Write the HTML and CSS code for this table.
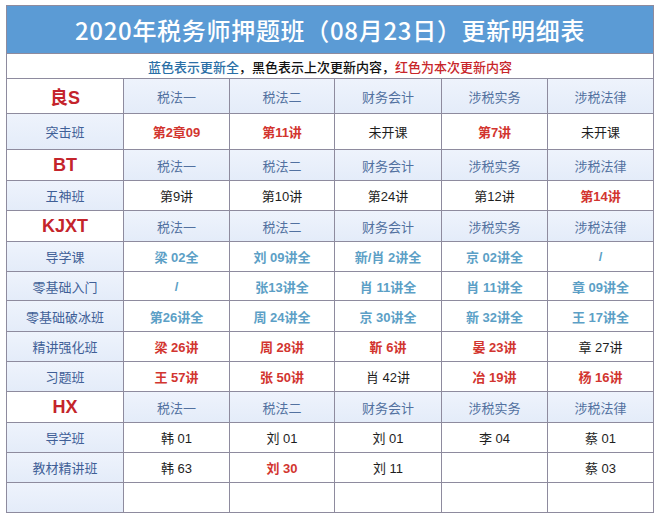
FILE: index.html
```html
<!DOCTYPE html>
<html lang="zh">
<head>
<meta charset="utf-8">
<link rel="stylesheet" href="styles.css">
</head>
<body>
<div class="sheet">
  <div class="title">2020年税务师押题班（08月23日）更新明细表</div>
  <div class="legend"><span class="lg-blue">蓝色表示更新全</span>，<span class="lg-black">黑色表示上次更新内容</span>，<span class="lg-red">红色为本次更新内容</span></div>

  <div class="group">良S</div>
  <div class="hd">税法一</div><div class="hd">税法二</div><div class="hd">财务会计</div><div class="hd">涉税实务</div><div class="hd">涉税法律</div>
  <div class="rowlab">突击班</div>
  <div class="c red">第2章09</div><div class="c red">第11讲</div><div class="c">未开课</div><div class="c red">第7讲</div><div class="c">未开课</div>

  <div class="group">BT</div>
  <div class="hd">税法一</div><div class="hd">税法二</div><div class="hd">财务会计</div><div class="hd">涉税实务</div><div class="hd">涉税法律</div>
  <div class="rowlab">五神班</div>
  <div class="c">第9讲</div><div class="c">第10讲</div><div class="c">第24讲</div><div class="c">第12讲</div><div class="c red">第14讲</div>

  <div class="group">KJXT</div>
  <div class="hd">税法一</div><div class="hd">税法二</div><div class="hd">财务会计</div><div class="hd">涉税实务</div><div class="hd">涉税法律</div>
  <div class="rowlab">导学课</div>
  <div class="c blue">梁 02全</div><div class="c blue">刘 09讲全</div><div class="c blue">新/肖 2讲全</div><div class="c blue">京 02讲全</div><div class="c blue">/</div>
  <div class="rowlab">零基础入门</div>
  <div class="c blue">/</div><div class="c blue">张13讲全</div><div class="c blue">肖 11讲全</div><div class="c blue">肖 11讲全</div><div class="c blue">章 09讲全</div>
  <div class="rowlab">零基础破冰班</div>
  <div class="c blue">第26讲全</div><div class="c blue">周 24讲全</div><div class="c blue">京 30讲全</div><div class="c blue">新 32讲全</div><div class="c blue">王 17讲全</div>
  <div class="rowlab">精讲强化班</div>
  <div class="c red">梁 26讲</div><div class="c red">周 28讲</div><div class="c red">靳 6讲</div><div class="c red">晏 23讲</div><div class="c">章 27讲</div>
  <div class="rowlab">习题班</div>
  <div class="c red">王 57讲</div><div class="c red">张 50讲</div><div class="c">肖 42讲</div><div class="c red">冶 19讲</div><div class="c red">杨 16讲</div>

  <div class="group">HX</div>
  <div class="hd">税法一</div><div class="hd">税法二</div><div class="hd">财务会计</div><div class="hd">涉税实务</div><div class="hd">涉税法律</div>
  <div class="rowlab">导学班</div>
  <div class="c">韩 01</div><div class="c">刘 01</div><div class="c">刘 01</div><div class="c">李 04</div><div class="c">蔡 01</div>
  <div class="rowlab">教材精讲班</div>
  <div class="c">韩 63</div><div class="c red">刘 30</div><div class="c">刘 11</div><div class="c"></div><div class="c">蔡 03</div>
  <div class="rowlab"></div>
  <div class="c"></div><div class="c"></div><div class="c"></div><div class="c"></div><div class="c"></div>
</div>
</body>
</html>
```
FILE: styles.css
```css
html, body {
  margin: 0;
  padding: 0;
  background: #ffffff;
}

body {
  font-family: "Liberation Sans", "Noto Sans CJK SC", sans-serif;
  font-size: 13px;
  color: #1a1a1a;
}

.sheet {
  margin: 5px 0 0 6px;
  width: 648px;
  box-sizing: border-box;
  display: grid;
  grid-template-columns: 116px 105px 104px 106px 105px 105px;
  grid-template-rows: 47px 24px 34px 35px 30px 29px 30px 29px 28px 30px 29px 29px 30px 29px 29px 29px;
  gap: 1px;
  padding: 1px;
  background: #8e8b9e;
}

.sheet > div {
  display: flex;
  align-items: center;
  justify-content: center;
  background: #ffffff;
  white-space: nowrap;
}

.title {
  grid-column: 1 / -1;
  background: #5b9bd5 !important;
  color: #ffffff;
  font-family: "Noto Sans CJK SC", sans-serif;
  font-size: 24px;
  font-weight: 500;
  letter-spacing: 0.7px;
}

.legend {
  grid-column: 1 / -1;
  font-family: "Noto Sans CJK SC", sans-serif;
  font-size: 13px;
  font-weight: 500;
  color: #111111;
}

.lg-blue { color: #2b6fa6; }
.lg-black { color: #111111; }
.lg-red { color: #c8262a; }

.group {
  color: #c4242b;
  font-size: 18px;
  font-weight: 700;
}

.hd {
  background: linear-gradient(#eef3fc, #e4ecf9) !important;
  color: #5271a0;
  font-family: "Noto Sans CJK SC", sans-serif;
}

.rowlab {
  background: linear-gradient(#eef3fc, #e4ecf9) !important;
  color: #3f5f97;
  font-family: "Noto Sans CJK SC", sans-serif;
}

.c {
  color: #1e1e1e;
}

.red {
  color: #d2352f;
  font-weight: 700;
}

.blue {
  color: #5c9fc6;
  font-weight: 700;
}
```
